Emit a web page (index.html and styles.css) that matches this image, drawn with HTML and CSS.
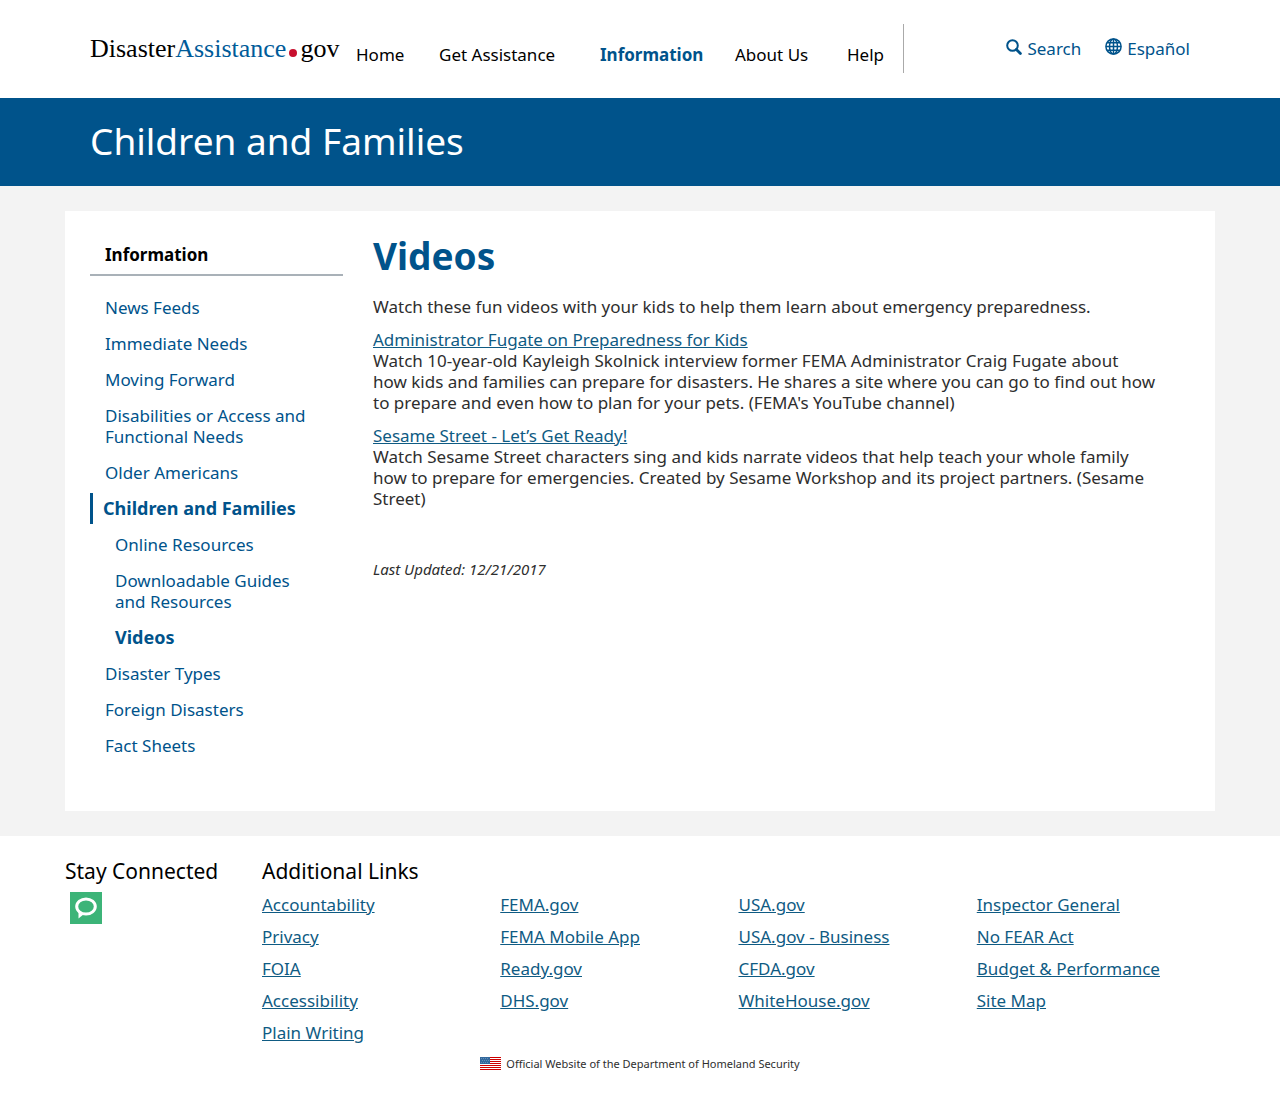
FILE: index.html
```html
<!DOCTYPE html>
<html lang="en">
<head>
<meta charset="utf-8">
<meta name="viewport" content="width=device-width, initial-scale=1">
<title>Videos | DisasterAssistance.gov</title>
<link rel="stylesheet" href="styles.css">
</head>
<body>
<header class="site-header">
  <a class="logo" href="#">Disaster<span class="logo-accent">Assistance</span><span class="logo-dot"></span>gov</a>
  <nav class="main-nav" aria-label="Main">
    <a href="#">Home</a>
    <a href="#">Get Assistance</a>
    <a class="current" href="#">Information</a>
    <a href="#">About Us</a>
    <a href="#">Help</a>
  </nav>
  <div class="tools">
    <a href="#"><svg class="icon" viewBox="0 0 16 16" aria-hidden="true"><circle cx="6.5" cy="6.5" r="5.3" fill="none" stroke="currentColor" stroke-width="2"/><path d="M10.4 10.4l4 4" fill="none" stroke="currentColor" stroke-width="2.8" stroke-linecap="round"/></svg><span>Search</span></a>
    <a href="#"><svg class="icon globe" viewBox="0 0 17 17" aria-hidden="true"><g fill="none" stroke="currentColor" stroke-width="1.5"><circle cx="8.5" cy="8.5" r="7.6"/><ellipse cx="8.5" cy="8.5" rx="4" ry="7.6"/><path d="M8.5 1v15M1 8.5h15M2.300 4.700h12.400M2.300 12.300h12.400"/></g></svg><span>Español</span></a>
  </div>
</header>
<div class="banner"><div class="banner-title">Children and Families</div></div>
<main class="page">
  <div class="panel">
    <nav class="side-nav" aria-label="Information">
      <h2>Information</h2>
      <ul>
        <li><a href="#">News Feeds</a></li>
        <li><a href="#">Immediate Needs</a></li>
        <li><a href="#">Moving Forward</a></li>
        <li><a href="#">Disabilities or Access and Functional Needs</a></li>
        <li><a href="#">Older Americans</a></li>
        <li class="section"><a href="#">Children and Families</a></li>
        <li class="sub"><a href="#">Online Resources</a></li>
        <li class="sub"><a href="#">Downloadable Guides and&nbsp;Resources</a></li>
        <li class="sub active"><a href="#">Videos</a></li>
        <li><a href="#">Disaster Types</a></li>
        <li><a href="#">Foreign Disasters</a></li>
        <li><a href="#">Fact Sheets</a></li>
      </ul>
    </nav>
    <article class="content">
      <h1>Videos</h1>
      <p>Watch these fun videos with your kids to help them learn about emergency preparedness.</p>
      <p><a href="#">Administrator Fugate on Preparedness for Kids</a><br>Watch 10-year-old Kayleigh Skolnick interview former FEMA Administrator Craig Fugate about how&nbsp;kids&nbsp;and families can prepare for disasters. He shares a site where you can go to find out how to&nbsp;prepare and even how to plan for your pets. (FEMA's YouTube channel)</p>
      <p><a href="#">Sesame Street - Let’s Get Ready!</a><br>Watch Sesame Street characters sing and kids narrate videos that help teach your whole family how&nbsp;to&nbsp;prepare for emergencies. Created by Sesame Workshop and its project partners. (Sesame Street)</p>
      <p class="updated">Last Updated: 12/21/2017</p>
    </article>
  </div>
</main>
<footer class="site-footer">
  <section class="connect">
    <h2>Stay Connected</h2>
    <a class="social" href="#" aria-label="GovDelivery"><svg viewBox="0 0 32 32" aria-hidden="true"><path fill="#3cb478" d="M0 0h32v32H0z"/><ellipse cx="16" cy="14.5" rx="9.300" ry="7.600" fill="none" stroke="#fff" stroke-width="3"/><path d="M8.500 19v7.500l5.500-4.500z" fill="#fff"/></svg></a>
  </section>
  <section class="links">
    <h2>Additional Links</h2>
    <ul>
      <li><a href="#">Accountability</a></li>
      <li><a href="#">Privacy</a></li>
      <li><a href="#">FOIA</a></li>
      <li><a href="#">Accessibility</a></li>
      <li><a href="#">Plain Writing</a></li>
      <li class="col-start"><a href="#">FEMA.gov</a></li>
      <li><a href="#">FEMA Mobile App</a></li>
      <li><a href="#">Ready.gov</a></li>
      <li><a href="#">DHS.gov</a></li>
      <li class="col-start"><a href="#">USA.gov</a></li>
      <li><a href="#">USA.gov - Business</a></li>
      <li><a href="#">CFDA.gov</a></li>
      <li><a href="#">WhiteHouse.gov</a></li>
      <li class="col-start"><a href="#">Inspector General</a></li>
      <li><a href="#">No FEAR Act</a></li>
      <li><a href="#">Budget &amp; Performance</a></li>
      <li><a href="#">Site Map</a></li>
    </ul>
  </section>
  <div class="official"><svg class="flag" viewBox="0 0 21 13" aria-hidden="true"><path fill="#fff" d="M0 0h21v13H0z"/><path stroke="#c00" d="M0 .5h21M0 2.500h21M0 4.500h21M0 6.500h21M0 8.500h21M0 10.500h21M0 12.500h21"/><path fill="#33689c" d="M0 0h10v7H0z"/><path stroke="#5f8fb8" stroke-dasharray="1 1" d="M1 1.500h8M2 3.500h7M1 5.500h8"/></svg><span>Official Website of the Department of Homeland Security</span></div>
</footer>
</body>
</html>
```
FILE: styles.css
```css
* { box-sizing: border-box; }
body { margin: 0; background: #fff; color: #2e2e2e; font: 17px/21px "Noto Sans", "Open Sans", sans-serif; }
ul { list-style: none; margin: 0; padding: 0; }
h1, h2, p { margin: 0; }
a { color: #00538b; text-decoration: none; }

.site-header { display: flex; align-items: flex-start; max-width: 1150px; margin: 0 auto; padding: 24px 25px 25px; }
.logo { width: 266px; padding-top: 8px; color: #000; font: 26px/34px "Liberation Serif", serif; white-space: nowrap; }
.logo-accent { color: #005b99; }
.logo-dot { display: inline-block; width: 8px; height: 8px; margin: 0 3px; border-radius: 50%; background: #c8102e; }
.main-nav { display: grid; grid-template-columns: 83px 161px 135px 112px 56px; padding-top: 20px; height: 49px; border-right: 1px solid #aaa; }
.main-nav a { color: #000; white-space: nowrap; }
.main-nav .current { color: #00538b; font-weight: 700; }
.tools { display: flex; gap: 24px; margin-left: auto; padding-top: 14px; }
.tools a { display: flex; gap: 5px; }
.icon { width: 16px; height: 16px; margin-top: 1px; }
.globe { width: 17px; height: 17px; margin-top: 0; }

.banner { background: #00538b; color: #fff; }
.banner-title { max-width: 1150px; margin: 0 auto; padding: 19px 25px 21px; font-size: 37px; line-height: 48px; }

.page { padding: 25px 0; background: #f3f3f3; }
.panel { display: grid; grid-template-columns: 253px 1fr; column-gap: 30px; max-width: 1150px; min-height: 600px; margin: 0 auto; padding: 25px; background: #fff; }
.side-nav h2 { padding: 8px 15px 9px; border-bottom: 2px solid #a9b1b8; color: #000; font-size: 17px; line-height: 21px; }
.side-nav ul { display: grid; gap: 15px; padding-top: 21px; }
.side-nav li { padding: 0 20px 0 15px; }
.side-nav .section { margin: -5px 0; padding: 5px 0 5px 10px; border-left: 3px solid #00538b; }
.side-nav .sub { padding-left: 25px; }
.side-nav .section, .side-nav .active { font-size: 18px; font-weight: 700; }
.content h1 { margin-bottom: 20px; color: #00538b; font-size: 37px; line-height: 40px; }
.content p { margin-bottom: 12px; }
.content a, .links a { color: #0f5b83; text-decoration: underline; }
.content .updated { margin-top: 50px; font-size: 15px; font-style: italic; }

.site-footer { display: grid; grid-template-columns: 197px 1fr; max-width: 1150px; margin: 0 auto; padding: 21px 0 37px; }
.site-footer h2 { color: #000; font-size: 21px; font-weight: 400; line-height: 28px; }
.social { display: block; width: 32px; height: 32px; margin: 7px 5px; }
.social svg { display: block; }
.links ul { display: grid; grid-template-rows: repeat(5, 32px); grid-auto-flow: column; grid-auto-columns: 1fr; padding-top: 9px; }
.links .col-start { grid-row-start: 1; }
.official { grid-column: 1 / -1; display: flex; justify-content: center; gap: 5px; padding-top: 2px; font-size: 11px; line-height: 16px; }
.flag { width: 21px; height: 13px; margin-top: 1px; }
```
